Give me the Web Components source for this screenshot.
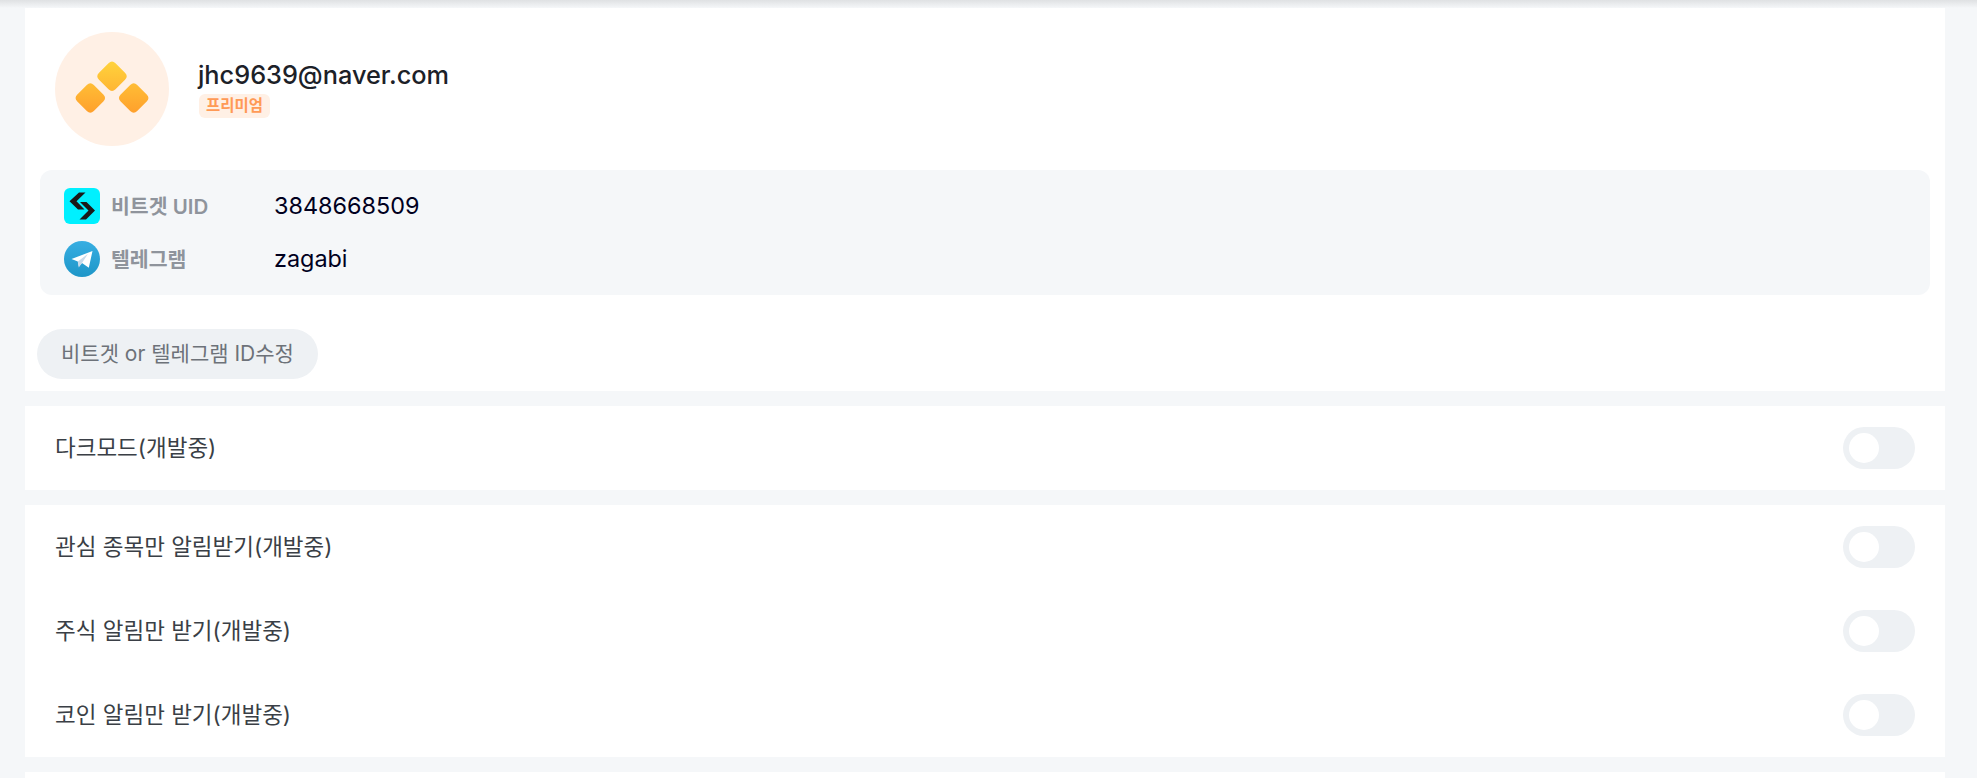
<!DOCTYPE html>
<html lang="ko">
<head>
<meta charset="utf-8">
<title>프로필</title>
<style>
    html, body {
        margin: 0;
        height: 778px;
        overflow: hidden;
        background-color: #f5f7f9;
        font-family: Inter, "Noto Sans CJK KR", sans-serif;
    }
</style>
</head>
<body>
<top-shadow></top-shadow>
<page-column>
    <setting-card>
        <profile-head email="jhc9639@naver.com" grade="프리미엄"></profile-head>
        <info-box>
            <info-row label="비트겟 UID" value="3848668509">
                <svg slot="icon" width="36" height="36" viewBox="0 0 36 36">
                    <rect width="36" height="36" rx="6" fill="#00f0ff"/>
                    <path d="M15 4.500 L21.500 4.500 L12.500 13.300 L20.500 21.500 L14 21.500 L5.500 13.300 Z" fill="#1a1a1a"/>
                    <path d="M16 14 L22.500 14 L31 22.500 L22 31.500 L15.500 31.500 L24.500 22.500 Z" fill="#1a1a1a"/>
                </svg>
            </info-row>
            <info-row label="텔레그램" value="zagabi">
                <svg slot="icon" width="36" height="36" viewBox="0 0 36 36">
                    <defs>
                        <linearGradient id="tg" x1="0" y1="0" x2="0" y2="1">
                            <stop offset="0" stop-color="#37aee2"/>
                            <stop offset="1" stop-color="#1e96c8"/>
                        </linearGradient>
                    </defs>
                    <circle cx="18" cy="18" r="18" fill="url(#tg)"/>
                    <path d="M7.500 18 L28.500 10 L24.800 26.800 L18 22 L14.800 25.500 L13.800 20.500 Z" fill="#fff"/>
                    <path d="M13.800 20.500 L14.800 26.500 L18 22 L24 12.800 Z" fill="#c8daea"/>
                </svg>
            </info-row>
        </info-box>
        <pill-button>비트겟 or 텔레그램 ID수정</pill-button>
    </setting-card>
    <setting-card>
        <toggle-row>다크모드(개발중)</toggle-row>
    </setting-card>
    <setting-card>
        <toggle-row>관심 종목만 알림받기(개발중)</toggle-row>
        <toggle-row>주식 알림만 받기(개발중)</toggle-row>
        <toggle-row>코인 알림만 받기(개발중)</toggle-row>
    </setting-card>
    <setting-card></setting-card>
</page-column>

<script>
// rounded diamond, absolute coords so the shared gradient runs across all three
function diamond(x, y) {
    return `M${x - 3.5} ${y - 13} Q${x} ${y - 16.5} ${x + 3.5} ${y - 13} L${x + 13} ${y - 3.5} Q${x + 16.5} ${y} ${x + 13} ${y + 3.5} L${x + 3.5} ${y + 13} Q${x} ${y + 16.5} ${x - 3.5} ${y + 13} L${x - 13} ${y + 3.5} Q${x - 16.5} ${y} ${x - 13} ${y - 3.5} Z`;
}

class TopShadow extends HTMLElement {
    connectedCallback() {
        const shadow = this.attachShadow({mode: 'open'});
        shadow.innerHTML = `
            <style>
                :host {
                    display: block;
                    height: 8px;
                    background: linear-gradient(#dfe1e3, #f5f7f9);
                }
            </style>`;
    }
}

class PageColumn extends HTMLElement {
    connectedCallback() {
        const shadow = this.attachShadow({mode: 'open'});
        shadow.innerHTML = `
            <style>
                :host {
                    display: flex;
                    flex-direction: column;
                    gap: 15px;
                    width: 1920px;
                    margin-left: 25px;
                }
            </style>
            <slot></slot>`;
    }
}

class SettingCard extends HTMLElement {
    connectedCallback() {
        const shadow = this.attachShadow({mode: 'open'});
        shadow.innerHTML = `
            <style>
                :host {
                    display: block;
                    background-color: #fff;
                }
                :host(:empty) {
                    height: 6px;
                }
            </style>
            <slot></slot>`;
    }
}

class ProfileHead extends HTMLElement {
    connectedCallback() {
        const shadow = this.attachShadow({mode: 'open'});
        shadow.innerHTML = `
            <style>
                :host {
                    display: flex;
                    align-items: center;
                    gap: 29px;
                    padding: 24px 30px;
                }
                .avatar {
                    width: 114px;
                    height: 114px;
                    border-radius: 50%;
                    background-color: #fff0e5;
                    flex: none;
                }
                .email {
                    margin: -1px 0 3px;
                    color: #1c2128;
                    font-size: 25.300px;
                    font-weight: 500;
                    line-height: 32px;
                }
                .badge {
                    display: inline-block;
                    margin-left: 1px;
                    padding: 0 7px;
                    border-radius: 6px;
                    background-color: #fff0e5;
                    color: #ff9a56;
                    font-size: 15.500px;
                    font-weight: 700;
                    line-height: 24px;
                }
            </style>
            <div class="avatar">
                <svg width="114" height="114" viewBox="0 0 114 114">
                    <defs>
                        <linearGradient id="gold" gradientUnits="userSpaceOnUse" x1="0" y1="30" x2="0" y2="81">
                            <stop offset="0" stop-color="#ffd23c"/>
                            <stop offset="1" stop-color="#ffa02c"/>
                        </linearGradient>
                    </defs>
                    <g fill="url(#gold)">
                        <path d="${diamond(57, 44.3)}"/>
                        <path d="${diamond(35.3, 66)}"/>
                        <path d="${diamond(78.7, 66)}"/>
                    </g>
                </svg>
            </div>
            <div>
                <div class="email">${this.getAttribute('email')}</div>
                <span class="badge">${this.getAttribute('grade')}</span>
            </div>`;
    }
}

class InfoBox extends HTMLElement {
    connectedCallback() {
        const shadow = this.attachShadow({mode: 'open'});
        shadow.innerHTML = `
            <style>
                :host {
                    display: flex;
                    flex-direction: column;
                    gap: 17px;
                    margin: 0 15px;
                    padding: 18px 24px;
                    border-radius: 12px;
                    background-color: #f5f7f9;
                }
            </style>
            <slot></slot>`;
    }
}

class InfoRow extends HTMLElement {
    connectedCallback() {
        const shadow = this.attachShadow({mode: 'open'});
        shadow.innerHTML = `
            <style>
                :host {
                    display: flex;
                    align-items: center;
                    height: 36px;
                }
                ::slotted(svg) {
                    display: block;
                }
                .label {
                    width: 163px;
                    margin: -2px 0 0 11px;
                    color: #8f949c;
                    font-size: 20.500px;
                    font-weight: 600;
                }
                .value {
                    margin-top: -2px;
                    color: #00001e;
                    font-size: 23.400px;
                }
            </style>
            <slot name="icon"></slot>
            <span class="label">${this.getAttribute('label')}</span>
            <span class="value">${this.getAttribute('value')}</span>`;
    }
}

class PillButton extends HTMLElement {
    connectedCallback() {
        const shadow = this.attachShadow({mode: 'open'});
        shadow.innerHTML = `
            <style>
                :host {
                    display: block;
                    width: fit-content;
                    margin: 34px 0 12px 12px;
                    padding: 0 24px;
                    border-radius: 25px;
                    background-color: #eef1f4;
                    color: #6d7279;
                    font-size: 21px;
                    line-height: 50px;
                }
            </style>
            <slot></slot>`;
    }
}

class ToggleSwitch extends HTMLElement {
    connectedCallback() {
        const shadow = this.attachShadow({mode: 'open'});
        shadow.innerHTML = `
            <style>
                :host {
                    display: block;
                    width: 72px;
                    height: 42px;
                    padding: 6px;
                    box-sizing: border-box;
                    border-radius: 21px;
                    background-color: #eef1f4;
                }
                div {
                    width: 30px;
                    height: 30px;
                    border-radius: 50%;
                    background-color: #fff;
                }
            </style>
            <div></div>`;
    }
}

class ToggleRow extends HTMLElement {
    connectedCallback() {
        const shadow = this.attachShadow({mode: 'open'});
        shadow.innerHTML = `
            <style>
                :host {
                    display: flex;
                    align-items: center;
                    justify-content: space-between;
                    height: 84px;
                    padding: 0 30px;
                    color: #3a3f46;
                    font-size: 22.500px;
                }
                span {
                    margin-top: -5px;
                }
            </style>
            <span><slot></slot></span>
            <toggle-switch></toggle-switch>`;
    }
}

customElements.define('top-shadow', TopShadow);
customElements.define('page-column', PageColumn);
customElements.define('setting-card', SettingCard);
customElements.define('profile-head', ProfileHead);
customElements.define('info-box', InfoBox);
customElements.define('info-row', InfoRow);
customElements.define('pill-button', PillButton);
customElements.define('toggle-switch', ToggleSwitch);
customElements.define('toggle-row', ToggleRow);
</script>
</body>
</html>
